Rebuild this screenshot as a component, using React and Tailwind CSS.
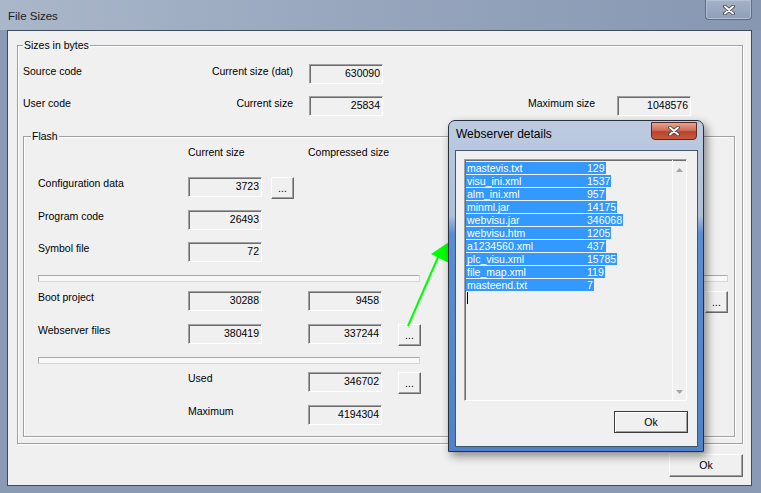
import React from 'react';

const FONT = "font-['Liberation_Sans',Arial,sans-serif]";

const WEB_FILES = [
  ['mastevis.txt', '129'],
  ['visu_ini.xml', '1537'],
  ['alm_ini.xml', '957'],
  ['minml.jar', '14175'],
  ['webvisu.jar', '346068'],
  ['webvisu.htm', '1205'],
  ['a1234560.xml', '437'],
  ['plc_visu.xml', '15785'],
  ['file_map.xml', '119'],
  ['masteend.txt', '7'],
];

const Field = ({ value, className = '' }) => (
  <div
    className={`w-[74px] h-[20px] shrink-0 border border-t-[#a0a0a0] border-l-[#a0a0a0] border-r-white border-b-white bg-[#f0f0f0] shadow-[inset_1px_1px_0_#6d6d6d] pr-[2px] text-right leading-[17px] ${className}`}
  >
    {value}
  </div>
);

const DotsButton = ({ className = '' }) => (
  <div
    className={`w-[23px] h-[22px] shrink-0 border border-t-white border-l-white border-r-[#696969] border-b-[#696969] shadow-[inset_-1px_-1px_0_#a0a0a0] bg-[#f0f0f0] flex items-center justify-center leading-[13px] ${className}`}
  >
    ...
  </div>
);

const Sep = ({ className = '' }) => (
  <div
    className={`h-[7px] shrink-0 border border-[#a8a8a8] border-b-[#d6d6d6] border-r-[#d6d6d6] bg-[#f8f8f8] rounded-[1px] ${className}`}
  />
);

const CloseGlyph = () => (
  <svg width="12" height="10" viewBox="0 0 12 10">
    <path d="M2 1.5 L10 8.5 M10 1.5 L2 8.5" stroke="#3a3a3a" strokeWidth="3.6" strokeLinecap="round" />
    <path d="M2 1.5 L10 8.5 M10 1.5 L2 8.5" stroke="#ffffff" strokeWidth="2" strokeLinecap="round" />
  </svg>
);

export default function App() {
  return (
    <div className={`relative w-[761px] h-[493px] overflow-hidden bg-[#8a9ab5] ${FONT} text-[10.5px] text-black flex flex-col select-none`}>
      {/* Title bar */}
      <div className="h-[30px] shrink-0 flex items-start bg-[linear-gradient(to_right,#aab7ca,#98a7be_45%,#8797b2)]">
        <span className="pl-[8px] pt-[9px] text-[11.5px] leading-[15px] text-[#1b1b1b]">File Sizes</span>
        <div className="ml-auto mr-[9px] w-[47px] h-[20px] border border-t-0 border-[#5f6e86] rounded-b-[4px] shadow-[inset_0_0_0_1px_#b3bfd2] bg-[linear-gradient(to_bottom,#a5b3c8,#8e9eb8)] flex items-center justify-center">
          <CloseGlyph />
        </div>
      </div>

      {/* Client area */}
      <div className="ml-[7px] w-[745px] h-[456px] shrink-0 border border-[#3f4a5c] bg-[#f0f0f0] flex flex-col">
        {/* Sizes in bytes */}
        <div className="relative ml-[9px] mt-[14px] w-[726px] h-[399px] shrink-0 border border-[#a0a0a0] shadow-[1px_1px_0_white,inset_1px_1px_0_white] flex flex-col">
          <span className="absolute -top-[7px] left-[5px] px-[1px] bg-[#f0f0f0] leading-[13px]">Sizes in bytes</span>

          <div className="mt-[18px] ml-[5px] flex items-start">
            <span className="w-[150px] leading-[13px] pt-[1px]">Source code</span>
            <span className="w-[120px] text-right leading-[13px] pt-[1px]">Current size (dat)</span>
            <Field value="630090" className="ml-[16px]" />
          </div>

          <div className="mt-[12px] ml-[5px] flex items-start">
            <span className="w-[150px] leading-[13px] pt-[1px]">User code</span>
            <span className="w-[120px] text-right leading-[13px] pt-[1px]">Current size</span>
            <Field value="25834" className="ml-[16px]" />
            <span className="ml-[145px] w-[89px] leading-[13px] pt-[1px]">Maximum size</span>
            <Field value="1048576" />
          </div>

          {/* Flash */}
          <div className="relative ml-[5px] mt-[20px] w-[712px] h-[301px] shrink-0 border border-[#a0a0a0] shadow-[1px_1px_0_white,inset_1px_1px_0_white] flex">
            <span className="absolute -top-[7px] left-[7px] px-[1px] bg-[#f0f0f0] leading-[13px]">Flash</span>

            <div className="pl-[14px] flex flex-col">
              <div className="mt-[9px] flex leading-[13px]">
                <span className="w-[150px]" />
                <span className="w-[120px]">Current size</span>
                <span>Compressed size</span>
              </div>

              <div className="mt-[18px] flex items-start">
                <span className="w-[150px] leading-[13px]">Configuration data</span>
                <Field value="3723" />
                <DotsButton className="ml-[9px]" />
              </div>

              <div className="mt-[11px] flex items-start">
                <span className="w-[150px] leading-[13px]">Program code</span>
                <Field value="26493" />
              </div>

              <div className="mt-[12px] flex items-start">
                <span className="w-[150px] leading-[13px]">Symbol file</span>
                <Field value="72" />
              </div>

              <Sep className="mt-[13px] w-[382px]" />

              <div className="mt-[9px] flex items-start">
                <span className="w-[150px] leading-[13px]">Boot project</span>
                <Field value="30288" />
                <Field value="9458" className="ml-[46px]" />
              </div>

              <div className="mt-[13px] flex items-start">
                <span className="w-[150px] leading-[13px]">Webserver files</span>
                <Field value="380419" />
                <Field value="337244" className="ml-[46px]" />
                <DotsButton className="ml-[16px]" />
              </div>

              <Sep className="mt-[11px] w-[382px]" />

              <div className="mt-[8px] flex items-start">
                <span className="w-[150px]" />
                <span className="w-[120px] leading-[13px]">Used</span>
                <Field value="346702" />
                <DotsButton className="ml-[16px]" />
              </div>

              <div className="mt-[11px] flex items-start">
                <span className="w-[150px]" />
                <span className="w-[120px] leading-[13px]">Maximum</span>
                <Field value="4194304" />
              </div>
            </div>

            {/* right half of the Flash group (mostly hidden) */}
            <div className="ml-auto mr-[6px] w-[270px] flex flex-col items-end">
              <Sep className="mt-[138px] w-full" />
              <DotsButton className="mt-[9px]" />
            </div>
          </div>
        </div>

        <div className="self-end mr-[8px] mt-[10px] w-[74px] h-[23px] shrink-0 border border-t-white border-l-white border-r-[#696969] border-b-[#696969] shadow-[inset_-1px_-1px_0_#a0a0a0] bg-[#f0f0f0] flex items-center justify-center leading-[13px]">
          Ok
        </div>
      </div>

      {/* green annotation arrow */}
      <svg className="absolute left-0 top-0 pointer-events-none" width="761" height="493" viewBox="0 0 761 493">
        <line x1="408" y1="326" x2="439" y2="255" stroke="#00ff00" strokeWidth="2" />
        <polygon points="431,254 452,240 449,263" fill="#00ff00" />
      </svg>

      {/* Webserver details popup */}
      <div className="absolute left-[448px] top-[120px] w-[256px] h-[332px] border border-[#26303f] rounded-t-[7px] bg-[linear-gradient(to_bottom,#bccbe0_0px,#aebfd8_95px,#5d8dd1_112px,#4f82c8_100%)] shadow-[3px_4px_10px_rgba(0,0,0,0.45)] flex flex-col">
        <div className="h-[29px] shrink-0 flex items-start">
          <span className="pl-[7px] pt-[6px] text-[12px] leading-[15px] text-black">Webserver details</span>
          <div className="ml-auto mr-[6px] mt-[1px] w-[46px] h-[18px] border border-[#5a2a20] rounded-b-[4px] bg-[linear-gradient(to_bottom,#e6a493,#cf6e57_45%,#b8432b_55%,#c65a40)] flex items-center justify-center">
            <CloseGlyph />
          </div>
        </div>

        <div className="ml-[6px] w-[243px] h-[297px] shrink-0 border border-[#45556d] bg-[#f0f0f0] flex flex-col">
          <div className="ml-[8px] mt-[8px] w-[223px] h-[242px] shrink-0 border border-t-[#a0a0a0] border-l-[#a0a0a0] border-r-white border-b-white shadow-[inset_1px_1px_0_#6d6d6d] flex">
            <div className="flex-1 pt-[2px] pl-[1px] flex flex-col">
              {WEB_FILES.map(([name, size]) => (
                <div key={name} className="h-[13px] leading-[13px]">
                  <span className="bg-[#3399ff] text-white pr-[1px]">
                    <span className="inline-block w-[121px] pl-[1px]">{name}</span>
                    {size}
                  </span>
                </div>
              ))}
              <div className="h-[13px] pl-[1px]">
                <div className="w-[1px] h-[12px] bg-black" />
              </div>
            </div>
            <div className="w-[14px] border-l border-l-[#fbfbfb] flex flex-col items-center justify-between pt-[8px] pb-[6px]">
              <svg width="7" height="4" viewBox="0 0 7 4"><polygon points="0,4 7,4 3.5,0" fill="#a6a6a6" /></svg>
              <svg width="7" height="4" viewBox="0 0 7 4"><polygon points="0,0 7,0 3.5,4" fill="#a6a6a6" /></svg>
            </div>
          </div>

          <div className="self-end mr-[9px] mt-[10px] w-[74px] h-[22px] shrink-0 border border-[#3c3c3c] shadow-[inset_1px_1px_0_white,inset_-1px_-1px_0_#a0a0a0] bg-[#f0f0f0] flex items-center justify-center leading-[13px]">
            Ok
          </div>
        </div>
      </div>
    </div>
  );
}
